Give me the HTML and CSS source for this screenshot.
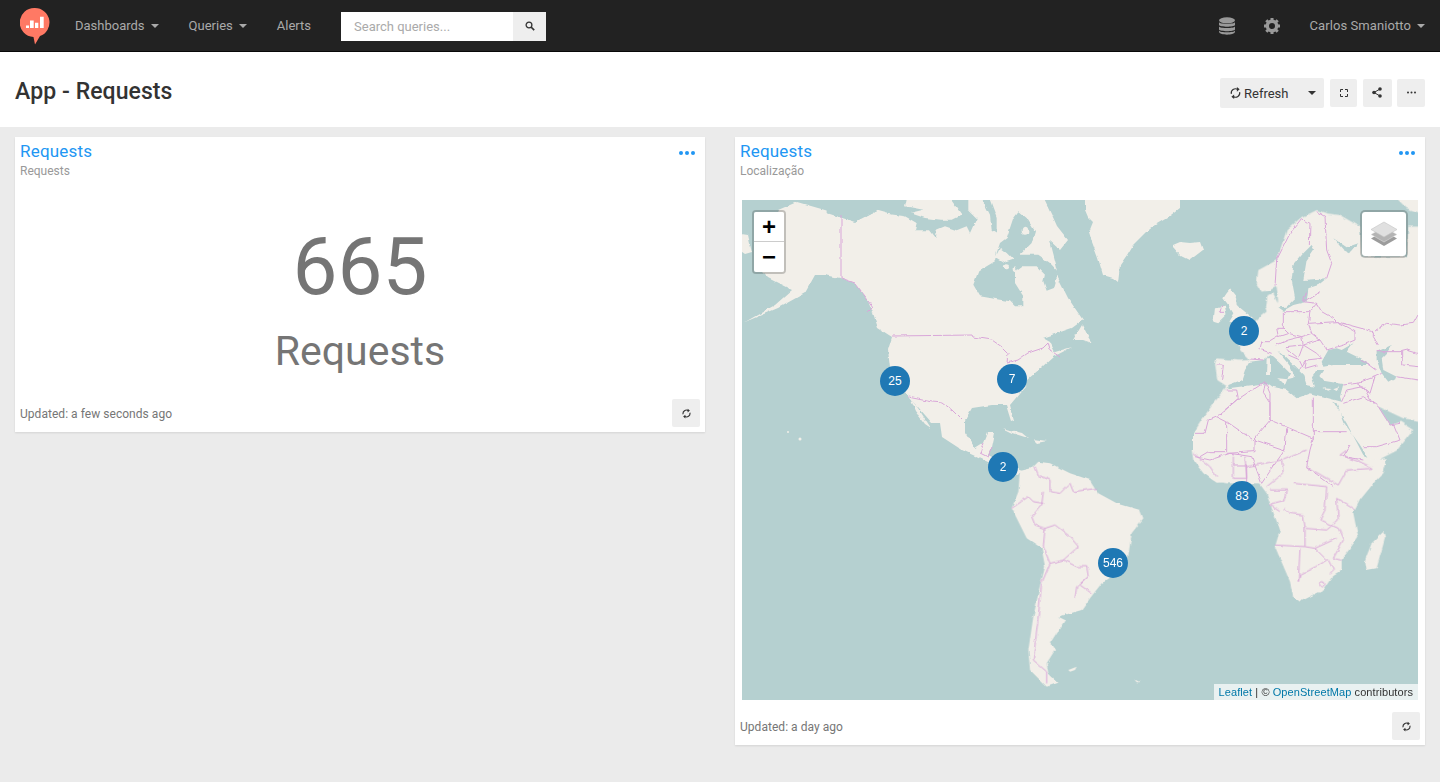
FILE: index.html
```html
<!DOCTYPE html>
<html lang="en">
  <head>
    <meta charset="UTF-8" />
    <meta name="viewport" content="width=device-width, initial-scale=1.0" />
    <title>App - Requests</title>
    <link rel="stylesheet" href="styles.css">
  </head>
  <body>
    <!-- Top navigation -->
    <nav class="navbar">
      <svg class="logo" width="30" height="38" viewBox="20 6 30 38">
        <path fill="#ff7964" d="M35 7a14.5 14.500 0 0 1 5 28.100L35 43.500 33.500 36A14.500 14.500 0 0 1 35 7z" />
        <path fill="#fff" d="M26 24.500h3V27h-3zM30 19.500h3.700V27H30zM35 21.700h3.300V27H35zM40 15.700h3.700V27H40z" />
      </svg>
      <a class="nav-link caret-link">Dashboards</a>
      <a class="nav-link caret-link">Queries</a>
      <a class="nav-link">Alerts</a>
      <div class="search">
        <span class="search-input">Search queries...</span>
        <span class="search-btn">
          <svg width="10" height="10" viewBox="0 0 10 10"><circle cx="4" cy="4" r="2.900" fill="none" stroke="#333" stroke-width="1.300" /><path d="M6 6l3.200 3.200" stroke="#333" stroke-width="1.700" /></svg>
        </span>
      </div>
      <div class="nav-right">
        <svg class="nav-icon" width="16" height="18" viewBox="0 0 16 18" fill="#999">
          <ellipse cx="8" cy="3.300" rx="8" ry="3" />
          <path d="M0 5.300c1 2 15 2 16 0V8c-1 2.300-15 2.300-16 0zM0 9.500c1 2 15 2 16 0v3c-1 2.300-15 2.300-16 0zM0 13.800c1 2 15 2 16 0V15c-1 3.500-15 3.500-16 0z" />
        </svg>
        <svg class="nav-icon gear" width="16" height="16" viewBox="0 0 16 16">
          <circle cx="8" cy="8" r="4.700" fill="none" stroke="#999" stroke-width="3.400" />
          <path stroke="#999" stroke-width="3" d="M8 0v3M8 13v3M0 8h3M13 8h3M2.300 2.300l2.200 2.200M11.500 11.500l2.200 2.200M13.700 2.300l-2.200 2.200M4.500 11.500l-2.200 2.200" />
        </svg>
        <a class="nav-link caret-link user">Carlos Smaniotto</a>
      </div>
    </nav>

    <!-- Page header -->
    <header class="page-header">
      <h1>App - Requests</h1>
      <div class="actions">
        <div class="btn refresh-btn">
          <svg class="refresh-icon" width="11" height="12" viewBox="0 0 12 13"><path d="M1.500 7.500a4.500 4.500 0 0 1 7-4.700M10.500 5.500a4.500 4.500 0 0 1-7 4.700" fill="none" stroke="#333" stroke-width="1.300" /><path d="M7.500 0v5l3-2.500zM4.500 13V8l-3 2.500z" fill="#333" /></svg>
          <span class="refresh-label">Refresh</span>
          <i class="caret"></i>
        </div>
        <div class="btn icon-btn btn-full">
          <svg width="8" height="8" viewBox="0 0 8 8"><path d="M.5 3V.5H3M5 .5h2.500V3M7.500 5v2.500H5M3 7.500H.5V5" fill="none" stroke="#333" /></svg>
        </div>
        <div class="btn icon-btn btn-share">
          <svg width="10" height="11" viewBox="0 0 10 11"><path d="M8 2L2 5.500 8 9" fill="none" stroke="#333" /><circle cx="8" cy="2" r="1.800" fill="#333" /><circle cx="2" cy="5.500" r="1.800" fill="#333" /><circle cx="8" cy="9" r="1.800" fill="#333" /></svg>
        </div>
        <div class="btn icon-btn">
          <svg width="9" height="3" viewBox="0 0 9 3" fill="#333"><circle cx="1" cy="1.500" r="1" /><circle cx="4.500" cy="1.500" r="1" /><circle cx="8" cy="1.500" r="1" /></svg>
        </div>
      </div>
    </header>

    <main class="dashboard">
      <!-- Counter widget -->
      <section class="card">
        <div class="card-head">
          <div>
            <div class="card-title">Requests</div>
            <div class="card-sub">Requests</div>
          </div>
          <div class="dots"><i></i><i></i><i></i></div>
        </div>
        <div class="counter">
          <div class="counter-value">665</div>
          <div class="counter-label">Requests</div>
        </div>
        <div class="card-foot">
          <span class="updated">Updated: a few seconds ago</span>
          <span class="btn foot-btn">
            <svg width="9" height="11" viewBox="0 0 12 13"><path d="M1.500 7.500a4.500 4.500 0 0 1 7-4.700M10.500 5.500a4.500 4.500 0 0 1-7 4.700" fill="none" stroke="#333" stroke-width="1.500" /><path d="M7.500 0v5l3-2.500zM4.500 13V8l-3 2.500z" fill="#333" /></svg>
          </span>
        </div>
      </section>

      <!-- Map widget -->
      <section class="card">
        <div class="card-head">
          <div>
            <div class="card-title">Requests</div>
            <div class="card-sub">Localização</div>
          </div>
          <div class="dots"><i></i><i></i><i></i></div>
        </div>
        <div class="map">
          <svg class="map-tiles" width="676" height="500" viewBox="742 200 676 500">
            <defs>
              <filter id="rough" filterUnits="userSpaceOnUse" x="730" y="185" width="700" height="530">
                <feTurbulence type="fractalNoise" baseFrequency="0.11" numOctaves="3" seed="4" />
                <feDisplacementMap in="SourceGraphic" scale="3.500" xChannelSelector="R" yChannelSelector="G" />
                <feGaussianBlur stdDeviation="0.25" />
              </filter>
            </defs>
            <rect x="742" y="200" width="676" height="500" fill="#b5d0d0" />
            <g filter="url(#rough)">
              <g fill="#f2efe9">
                <!-- North America -->
                <polygon points="797,202 818,208 842,215 865,217 878,210 880,190 1040,190 1052,215 1057,226 1068,240 1060,250 1050,241 1058,272 1058,278 1068,298 1083,320 1072,328 1043,338 1050,342 1055,352 1072,347 1053,357 1042,367 1027,380 1025,387 1010,405 1014,420 1011,421 1006,405 992,405 972,408 965,420 965,433 975,448 983,443 987,433 995,433 992,447 988,455 1005,463 1022,470 1018,476 1005,473 988,462 962,450 942,437 940,423 932,423 918,407 908,397 890,367 888,350 892,337 878,328 873,313 868,300 855,283 840,278 825,275 815,275 805,293 778,308 745,322 775,305 792,290 782,285 768,278 760,270 768,260 765,240 772,225 778,210" />
                <polygon points="735,233 748,235 752,252 745,254 735,247" />
                <polygon points="910,398 918,408 931,428 925,424 916,412" />
                <!-- Eurasia and upper Africa -->
                <g transform="translate(1130 190) scale(.33333)">
                  <polygon points="880,110 835,110 830,200 695,200 690,110 630,75 590,70 560,60 510,85 470,120 450,180 440,210 385,240 380,280 395,305 420,300 440,290 445,340 430,310 410,315 405,350 410,365 390,380 375,395 355,420 320,440 330,480 360,510 330,512 260,505 255,520 262,570 285,585 292,590 250,640 215,690 190,730 190,790 205,830 250,870 290,880 400,880 470,900 700,900 760,850 770,815 705,832 715,825 800,782 850,720 810,695 780,705 745,650 820,685 880,695" />
                  <polygon points="785,10 880,10 880,72 830,55" />
                </g>
                <!-- South America, lower Africa -->
                <g transform="translate(950 450) scale(.33333)">
                  <polygon points="265,35 250,50 210,60 205,125 185,175 230,265 275,295 285,350 265,430 250,500 235,600 240,660 290,710 325,698 295,670 290,640 315,600 300,580 345,510 325,500 395,480 420,445 455,400 530,350 545,250 580,205 570,180 500,160 445,130 420,90 360,70 300,40" />
                  <polygon points="725,0 1190,0 1240,30 1310,25 1295,70 1230,150 1210,190 1220,240 1225,260 1175,330 1175,360 1150,375 1120,420 1050,455 1030,440 1020,395 975,290 990,240 965,175 950,130 920,90 800,98 760,70 730,30" />
                  <polygon points="1300,245 1305,265 1280,355 1250,360 1245,330 1265,280" />
                  <polygon points="355,660 380,650 375,660 360,665" />
                  <polygon points="553,688 570,697 560,697" />
                </g>
              </g>
              <!-- Bays and inland seas -->
              <g fill="#b5d0d0">
                <g transform="translate(830 198) scale(.33333)">
                  <polygon points="-10,-20 -10,45 75,72 140,38 175,48 225,55 260,75 255,97 300,97 318,120 320,95 345,85 380,97 410,85 420,105 440,60 415,35 415,-20" />
                  <polygon points="445,-20 470,-20 500,60 500,105 485,95 480,50" />
                  <polygon points="430,260 445,220 495,190 500,165 510,135 530,120 550,60 565,40 590,60 615,100 605,135 585,155 570,170 625,170 660,195 685,222 672,270 650,278 640,250 645,230 620,205 575,205 555,220 555,255 580,295 580,325 555,325 540,310 510,305 450,295" />
                </g>
                <g transform="translate(1130 190) scale(.33333)">
                  <polygon points="445,352 470,350 495,325 485,270 490,225 520,190 545,165 552,178 530,210 520,270 590,265 565,285 535,295 530,335 490,345 460,362" />
                  <polygon points="610,145 640,180 660,190 685,160 650,172" />
                  <polygon points="610,635 650,700 700,795 712,800 690,765 640,695 620,640" />
                </g>
                <g transform="translate(1200 290) scale(.33333)">
                  <polygon points="85,285 125,270 135,240 150,215 190,210 212,195 235,215 270,250 262,268 285,262 270,228 232,182 255,200 290,235 310,255 320,285 345,290 335,260 350,240 370,240 358,258 370,272 430,282 420,320 425,335 385,325 330,310 290,325 260,300 215,290 200,280 85,295" />
                  <polygon points="365,215 385,180 410,175 425,180 460,160 440,185 480,205 510,225 480,225 440,225 400,225 370,230" />
                  <polygon points="530,185 575,165 560,190 545,205 550,240 590,260 565,275 545,250 530,210" />
                </g>
              </g>
              <g fill="#f2efe9">
                <g transform="translate(830 198) scale(.33333)">
                  <polygon points="235,-20 345,-20 395,50 365,65 330,65 285,60 240,45 280,35 225,25" />
                  <polygon points="510,150 530,165 550,185 520,195 495,180" />
                  <ellipse cx="585" cy="98" rx="10" ry="12" />
                  <ellipse cx="528" cy="205" rx="9" ry="6" />
                  <ellipse cx="555" cy="213" rx="4" ry="8" />
                </g>
                <polygon points="1085,190 1180,190 1180,208 1167,218 1150,228 1133,245 1127,255 1120,265 1118,282 1113,278 1103,275 1098,258 1092,242 1089,232 1093,222 1088,217 1085,210" />
                <polygon points="1173,245 1180,242 1190,243 1200,242 1203,250 1190,260 1180,255 1173,247" />
                <polygon points="1073,340 1082,325 1087,335 1092,343 1083,340" />
                <polygon points="1002,428 1022,433 1028,438 1012,433" />
                <polygon points="1033,439 1047,441 1037,443" />
                <circle cx="788" cy="432" r="1" />
                <circle cx="800" cy="439" r="1.500" />
                <g transform="translate(1130 190) scale(.33333)">
                  <polygon points="300,298 318,320 320,345 345,365 370,385 330,400 295,395 310,370 295,345 280,325 290,310" />
                  <polygon points="250,395 255,355 285,350 290,375 265,400" />
                </g>
                <g transform="translate(1200 290) scale(.33333)">
                  <polygon points="200,205 210,205 210,255 198,255" />
                  <polygon points="235,265 262,268 255,285" />
                  <polygon points="370,295 395,297 385,302" />
                  <polygon points="400,298 420,290 410,303" />
                </g>
              </g>
              <!-- Country borders -->
              <g class="borders">
                <polyline points="841,215 841,278 855,283 868,300 873,307 868,312" />
                <polyline points="892,336 972,335 973,337 992,340 1002,347 1008,353 1007,363" />
                <polyline points="1007,363 1018,360 1028,353 1043,348 1048,343 1050,350 1060,357" />
                <polyline points="908,397 932,402 943,403 952,410 962,420" />
                <polyline points="983,443 980,453 988,457 992,447" />
                <g transform="translate(1130 190) scale(.33333)">
                  <polyline points="435,290 440,210 480,130 515,85 540,100 538,165" />
                  <polyline points="560,65 585,80 590,180 605,220 590,265" />
                  <polyline points="640,640 700,620 745,650 780,705 810,700" />
                  <polyline points="700,770 740,770 810,750 790,700" />
                  <polyline points="550,620 550,725 650,725" />
                  <polyline points="420,610 420,690 550,745 550,725" />
                  <polyline points="260,680 320,630 405,575 420,610" />
                  <polyline points="420,690 370,750 290,695 260,680" />
                  <polyline points="195,730 225,730 235,690 260,680" />
                  <polyline points="290,695 290,785 235,785 210,800" />
                  <polyline points="470,715 465,780 375,750 375,785 290,790" />
                  <polyline points="550,745 540,780 530,830 610,890" />
                  <polyline points="660,765 640,800 700,810" />
                  <polyline points="195,800 240,810 300,790 365,800 395,880" />
                  <polyline points="395,880 450,800 465,780" />
                  <polyline points="310,825 350,825 350,880" />
                </g>
                <g transform="translate(1200 290) scale(.33333)">
                  <polyline points="250,65 250,115 230,115 235,140 210,155 185,155 180,178 215,190" />
                  <polyline points="250,65 330,65 325,100 335,130 305,140 265,130 250,115" />
                  <polyline points="325,100 410,95 465,125 465,150 430,165 380,180" />
                  <polyline points="335,130 360,150 380,180" />
                  <polyline points="230,165 265,150 305,140 310,165 360,150" />
                  <polyline points="235,140 265,130" />
                  <polyline points="255,170 310,165 350,190 365,205 320,210 300,240" />
                  <polyline points="260,175 295,205 310,235" />
                  <polyline points="310,165 295,205" />
                  <polyline points="320,210 315,235 350,225" />
                  <polyline points="265,195 300,210" />
                  <polyline points="320,5 310,35 350,40 365,65 400,85 410,95" />
                  <polyline points="310,35 360,5" />
                  <polyline points="330,65 350,40" />
                  <polyline points="410,95 520,125 520,140 535,165" />
                  <polyline points="480,210 510,225 530,240" />
                  <polyline points="525,260 510,310 470,280 430,285" />
                  <polyline points="470,280 525,260 545,250" />
                  <polyline points="425,335 440,300 490,290 520,345" />
                  <polyline points="590,260 654,270" />
                  <polyline points="525,120 560,100 600,105 640,100 654,75" />
                  <polyline points="530,185 600,185 620,180 654,190" />
                  <polyline points="605,185 605,225 654,230" />
                  <polyline points="80,300 110,300 115,325 60,375" />
                  <polyline points="195,280 190,310 210,340 210,390" />
                  <polyline points="50,225 70,225 65,270" />
                  <polyline points="150,207 190,210" />
                  <polyline points="65,50 60,70 75,70" />
                </g>
                <g transform="translate(950 450) scale(.33333)">
                  <polyline points="255,50 265,75 300,90 300,125 330,130 360,100 370,125 440,115" />
                  <polyline points="280,125 275,165 245,200 255,225 285,235 315,225 360,260 385,290 340,330 300,340 280,290 285,235" />
                  <polyline points="300,340 275,400 265,500 250,630 290,665 290,700" />
                  <polyline points="340,330 380,350 410,350 415,380 380,410 375,445" />
                  <polyline points="415,380 390,405 425,430" />
                  <polyline points="185,175 235,140 250,155 280,160" />
                  <polyline points="730,10 780,50 800,80" />
                  <polyline points="850,20 850,85 890,85 885,20" />
                  <polyline points="890,50 995,30 1000,70 950,110" />
                  <polyline points="1000,30 1070,0" />
                  <polyline points="1070,50 1165,105 1190,60 1270,55 1240,40 1170,15 1190,0" />
                  <polyline points="1030,100 1130,110 1125,180 1110,210 1165,235" />
                  <polyline points="1000,175 1020,190 1060,195 1065,235 1130,240 1165,210 1160,145 1215,180" />
                  <polyline points="1165,235 1180,270 1150,325 1175,330" />
                  <polyline points="1065,235 1065,290 975,285" />
                  <polyline points="1065,290 1095,295 1130,330 1100,350 1050,375 1045,395" />
                  <polyline points="1050,295 1045,395" />
                  <polyline points="1135,330 1150,360 1140,370" />
                  <polyline points="1095,295 1160,265" />
                  <polyline points="960,120 1010,120 1000,155 960,165 990,185" />
                  <circle cx="1117" cy="403" r="8" />
                </g>
              </g>
            </g>
          </svg>

          <!-- Zoom and layer controls -->
          <div class="zoom-ctl">
            <span class="zoom-btn">+</span>
            <span class="zoom-btn">−</span>
          </div>
          <div class="layers-ctl">
            <svg width="28" height="26" viewBox="0 0 28 26">
              <path fill="#9c9c9c" d="M14 10l13 7.500L14 25 1 17.500z" />
              <path fill="#b4b4b4" stroke="#e4e4e4" stroke-width=".5" d="M14 6l13 7.500L14 21 1 13.500z" />
              <path fill="#e0e0e0" stroke="#c4c4c4" stroke-width=".6" d="M14 1l13 7.500L14 16 1 8.500z" />
            </svg>
          </div>

          <!-- Clusters -->
          <span class="pin" style="left: 138px; top: 166px">25</span>
          <span class="pin" style="left: 255px; top: 164px">7</span>
          <span class="pin" style="left: 246px; top: 252px">2</span>
          <span class="pin" style="left: 487px; top: 116px">2</span>
          <span class="pin" style="left: 485px; top: 281px">83</span>
          <span class="pin" style="left: 356px; top: 348px">546</span>

          <div class="attribution"><a>Leaflet</a> | © <a>OpenStreetMap</a> contributors</div>
        </div>
        <div class="card-foot">
          <span class="updated">Updated: a day ago</span>
          <span class="btn foot-btn">
            <svg width="9" height="11" viewBox="0 0 12 13"><path d="M1.500 7.500a4.500 4.500 0 0 1 7-4.700M10.500 5.500a4.500 4.500 0 0 1-7 4.700" fill="none" stroke="#333" stroke-width="1.500" /><path d="M7.500 0v5l3-2.500zM4.500 13V8l-3 2.500z" fill="#333" /></svg>
          </span>
        </div>
      </section>
    </main>
  </body>
</html>
```

FILE: styles.css
```css
html,
body {
  margin: 0;
  height: 100%;
}
body {
  background-color: #ebebeb;
  color: #333;
  font-family: Roboto, "Liberation Sans", sans-serif;
  font-size: 13px;
  overflow: hidden;
}
.navbar {
  display: flex;
  align-items: center;
  height: 51px;
  padding-left: 20px;
  background-color: #222;
  border-bottom: 1px solid #080808;
}
.logo {
  margin-right: 25px;
  margin-top: 1px;
}
.nav-link {
  color: #aaa;
  font-size: 13px;
  margin-right: 30px;
}
.caret-link::after {
  content: "";
  display: inline-block;
  margin-left: 6px;
  vertical-align: 2px;
  border-top: 4px solid #aaa;
  border-left: 4px solid transparent;
  border-right: 4px solid transparent;
}
.search {
  display: flex;
  width: 205px;
  height: 29px;
  margin-top: 1px;
  background-color: #fff;
}
.search-input {
  flex: 1;
  padding-left: 13px;
  line-height: 29px;
  color: #aaa;
}
.search-btn {
  display: flex;
  align-items: center;
  justify-content: center;
  width: 33px;
  background-color: #eee;
}
.nav-right {
  display: flex;
  align-items: center;
  margin-left: auto;
}
.nav-icon {
  margin-right: 29px;
}
.gear {
  margin-right: 30px;
}
.user {
  margin-right: 15px;
  letter-spacing: 0.08px;
}
.page-header {
  display: flex;
  align-items: center;
  justify-content: space-between;
  height: 75px;
  padding: 3px 15px 0;
  box-sizing: border-box;
  background-color: #fff;
}
.page-header h1 {
  margin: 0;
  font-size: 23px;
  font-weight: 500;
  color: #333;
  letter-spacing: 0.08px;
}
.actions {
  display: flex;
  align-items: center;
  gap: 5.500px;
  margin-top: 3px;
}
.btn {
  display: flex;
  align-items: center;
  justify-content: center;
  background-color: #eee;
  border-radius: 2px;
}
.refresh-btn {
  width: 104px;
  height: 30px;
  margin-right: 0.500px;
  justify-content: flex-start;
  padding-left: 10px;
  box-sizing: border-box;
  color: #333;
}
.refresh-icon {
  margin-right: 3px;
}
.refresh-label {
  margin-top: 1px;
}
.caret {
  margin-left: auto;
  margin-right: 8px;
  border-top: 4px solid #333;
  border-left: 4px solid transparent;
  border-right: 4px solid transparent;
}
.icon-btn {
  width: 28px;
  height: 28px;
}
.btn-full {
  width: 27px;
}
.btn-share {
  width: 29px;
}
.dashboard {
  display: grid;
  grid-template-columns: 690px 690px;
  column-gap: 30px;
  align-items: start;
  padding: 10px 15px;
}
.card {
  background-color: #fff;
  box-shadow: 0 1px 2px rgba(0, 0, 0, 0.1);
}
.card-head {
  display: flex;
  justify-content: space-between;
  height: 63px;
  padding: 4px 10px 0 5px;
  box-sizing: border-box;
}
.card-title {
  color: #2196f3;
  font-size: 17px;
  line-height: 21px;
  letter-spacing: 0.2px;
}
.card-sub {
  margin-top: 1px;
  color: #999;
  font-size: 12px;
  line-height: 16px;
}
.dots {
  display: flex;
  gap: 2px;
  margin-top: 10px;
  height: 4px;
}
.dots i {
  width: 4px;
  height: 4px;
  border-radius: 50%;
  background-color: #2196f3;
}
.counter {
  height: 199px;
  box-sizing: border-box;
  padding-top: 20px;
  color: #757575;
  text-align: center;
}
.counter-value {
  font-size: 80px;
  line-height: 95px;
}
.counter-label {
  margin-top: 10px;
  font-size: 41px;
  line-height: 52px;
}
.card-foot {
  display: flex;
  align-items: center;
  justify-content: space-between;
  height: 33px;
  padding: 0 5px 5px;
  box-sizing: border-box;
  color: #767676;
  font-size: 12px;
}
.updated {
  margin-top: 2px;
  letter-spacing: 0.04px;
}
.foot-btn {
  width: 28px;
  height: 28px;
}
.map {
  position: relative;
  width: 676px;
  height: 500px;
  margin: 0 7px 12px;
  font-family: "Liberation Sans", sans-serif;
  overflow: hidden;
}
.map-tiles {
  display: block;
}
.borders {
  fill: none;
  stroke: #d9a6d9;
  stroke-width: 1;
}
.borders * {
  vector-effect: non-scaling-stroke;
}
.zoom-ctl {
  position: absolute;
  left: 10px;
  top: 10px;
  display: flex;
  flex-direction: column;
  width: 30px;
  border: 2px solid rgba(0, 0, 0, 0.2);
  border-radius: 4px;
  background-clip: padding-box;
}
.zoom-btn {
  display: block;
  height: 30px;
  line-height: 29px;
  background-color: #fff;
  color: #000;
  font-size: 24px;
  font-weight: bold;
  text-align: center;
}
.zoom-btn:first-child {
  height: 29px;
  border-bottom: 1px solid #ccc;
  border-radius: 2px 2px 0 0;
}
.zoom-btn:last-child {
  border-radius: 0 0 2px 2px;
}
.layers-ctl {
  position: absolute;
  right: 10px;
  top: 10px;
  display: flex;
  align-items: center;
  justify-content: center;
  width: 44px;
  height: 44px;
  background-color: #fff;
  border: 2px solid rgba(0, 0, 0, 0.2);
  border-radius: 5px;
  background-clip: padding-box;
}
.pin {
  position: absolute;
  width: 30px;
  height: 30px;
  border-radius: 50%;
  background-color: #1f78b4;
  color: #fff;
  font-size: 12px;
  line-height: 30px;
  text-align: center;
}
.attribution {
  position: absolute;
  right: 0;
  bottom: 0;
  padding: 0 5px;
  height: 16px;
  line-height: 16px;
  background-color: rgba(255, 255, 255, 0.7);
  color: #333;
  font-size: 11px;
  letter-spacing: 0.08px;
}
.attribution a {
  color: #0078a8;
}
```
